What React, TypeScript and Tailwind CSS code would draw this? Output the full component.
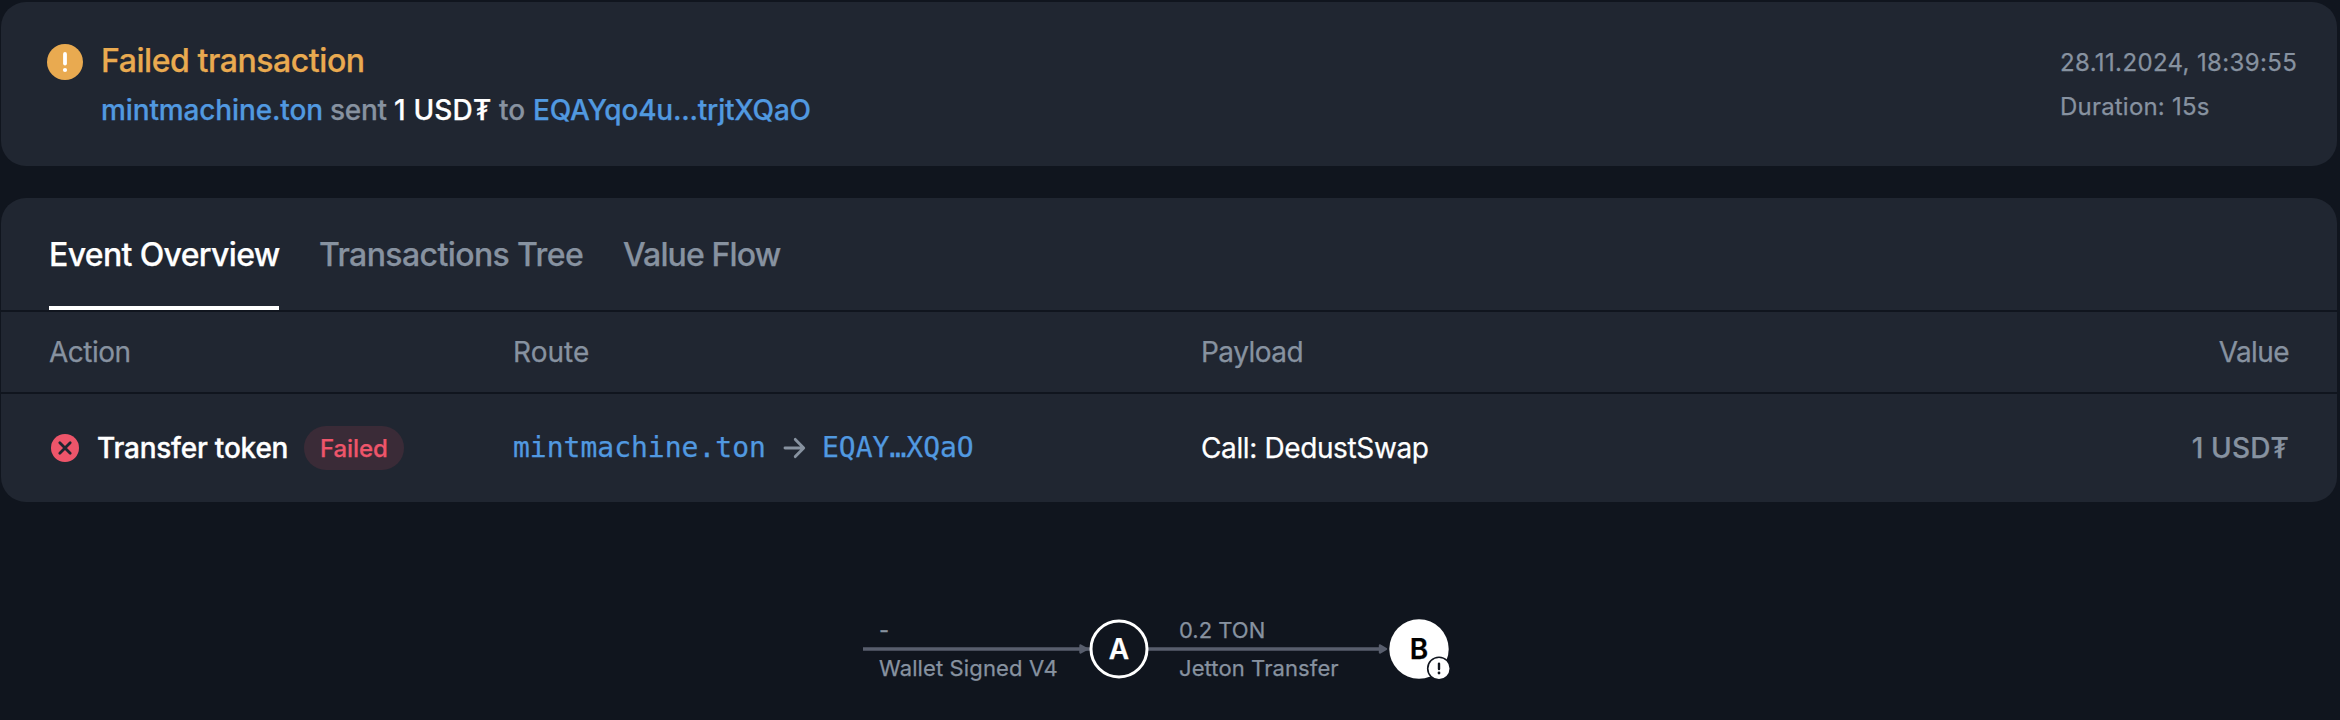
function Header() {
  return (
    <section className="flex h-[164px] justify-between rounded-[25px] bg-[#202631] pr-[41px] pl-[46px]">
      <div className="flex pt-[37px]">
        <svg className="mt-[5px] h-9 w-9" viewBox="0 0 36 36">
          <circle cx="18" cy="18" r="18" fill="#e9aa50" />
          <path d="M18 10v9.5" stroke="#fff" strokeWidth="3.8" strokeLinecap="round" />
          <circle cx="18" cy="26" r="2.1" fill="#fff" />
        </svg>
        <div className="ml-[18px]">
          <h1 className="h-11 text-[32px] leading-[44px] font-medium tracking-[-0.44px] text-[#e9aa50]">
            Failed transaction
          </h1>
          <div className="mt-[7px] flex text-[28px] leading-10 font-medium whitespace-nowrap">
            <span className="w-[229px] tracking-[-0.13px] text-[#5199e0]">mintmachine.ton</span>
            <span className="w-[64px] tracking-[-0.29px] text-[#8792a0]">sent</span>
            <span className="w-[105px] tracking-[0.18px] text-white">1 USD₮</span>
            <span className="w-[34px] text-[#8792a0]">to</span>
            <span className="tracking-[-0.21px] text-[#5199e0]">EQAYqo4u...trjtXQaO</span>
          </div>
        </div>
      </div>
      <div className="w-[236px] pt-[39px] text-[24px] leading-[44px] whitespace-nowrap text-[#8792a0]">
        <div className="tracking-[0.36px]">28.11.2024, 18:39:55</div>
        <div className="tracking-[0.2px]">Duration: 15s</div>
      </div>
    </section>
  );
}

function Tabs() {
  return (
    <nav className="flex h-28 pl-12 text-[32px] leading-[114px] font-medium whitespace-nowrap text-[#8792a0]">
      <div className="h-28 w-[230px] border-b-4 border-white tracking-[-0.65px] text-white">Event Overview</div>
      <div className="ml-10 w-[264px] tracking-[-0.6px]">Transactions Tree</div>
      <div className="ml-10 tracking-[-0.87px]">Value Flow</div>
    </nav>
  );
}

function ActionTable() {
  return (
    <div className="text-[28px] whitespace-nowrap text-[#8792a0]">
      <div className="grid h-[82px] grid-cols-[464px_688px_1fr_auto] items-center border-t-2 border-[#10151e] pr-[48px] pl-12">
        <div className="tracking-[-0.5px]">Action</div>
        <div className="tracking-[0.02px]">Route</div>
        <div className="tracking-[-0.53px]">Payload</div>
        <div className="tracking-[-0.6px]">Value</div>
      </div>
      <div className="grid h-[110px] grid-cols-[464px_688px_1fr_auto] items-center border-t-2 border-[#10151e] pr-[48px] pl-12">
        <div className="flex items-center">
          <svg className="ml-0.5 h-7 w-7" viewBox="0 0 28 28">
            <circle cx="14" cy="14" r="14" fill="#ee556a" />
            <path d="M8.8 8.8l10.4 10.4M19.2 8.8L8.8 19.2" stroke="#202631" strokeWidth="2.8" strokeLinecap="round" />
          </svg>
          <span className="ml-[18px] w-[207px] font-medium tracking-[-0.22px] text-white [-webkit-text-stroke:0.35px]">Transfer token</span>
          <span className="flex h-11 w-[100px] items-center rounded-full bg-[#3a2b37] pt-px pl-[16px] text-[24px] font-medium tracking-[-0.08px] text-[#ee556a]">
            Failed
          </span>
        </div>
        <div className="flex items-center font-['DejaVu_Sans_Mono',monospace] text-[#5199e0]">
          <span className="w-[270px]">mintmachine.ton</span>
          <svg className="h-6 w-[24px]" viewBox="0 0 24 24" fill="none" stroke="#8792a0" strokeWidth="2.9" strokeLinecap="round" strokeLinejoin="round">
            <path d="M2 12h18.5M12.3 3.4l8.4 8.6-8.4 8.6" />
          </svg>
          <span className="ml-[15px]">EQAY…XQaO</span>
        </div>
        <div className="tracking-[-0.38px] text-white">Call: DedustSwap</div>
        <div className="font-medium tracking-[0.15px]">1 USD₮</div>
      </div>
    </div>
  );
}

function TransactionGraph() {
  return (
    <div className="relative h-[88px] w-[620px] text-[22px] leading-7 whitespace-nowrap text-[#8792a0]">
      <svg className="absolute inset-0 h-[88px] w-[620px]" viewBox="0 0 620 88">
        <path d="M13 49h227M298 49h235" stroke="#585e6d" strokeWidth="3.4" />
        <path d="M230.5 45.5l6.5 3.5-6.5 3.5zM530 45.5l6 3.5-6 3.5z" fill="#585e6d" stroke="#585e6d" strokeWidth="2.4" strokeLinejoin="round" />
        <circle cx="269" cy="49" r="28" fill="#10151e" stroke="#fff" strokeWidth="3" />
        <circle cx="569" cy="49" r="29.7" fill="#fff" />
        <circle cx="589" cy="68.5" r="11.3" fill="#fff" stroke="#10151e" strokeWidth="1.6" />
        <path d="M589 63.8v5.2" stroke="#10151e" strokeWidth="2.4" strokeLinecap="round" />
        <circle cx="589" cy="73" r="1.4" fill="#10151e" />
      </svg>
      <span className="absolute top-4 left-[29px]">-</span>
      <span className="absolute top-[54px] left-[29px] tracking-[0.12px]">Wallet Signed V4</span>
      <span className="absolute top-4 left-[329px]">0.2 TON</span>
      <span className="absolute top-[54px] left-[329px] tracking-[0.1px]">Jetton Transfer</span>
      <span className="absolute top-[35px] left-[239px] w-[60px] text-center text-[28px] font-semibold text-white">A</span>
      <span className="absolute top-[35px] left-[539px] w-[60px] text-center text-[28px] font-semibold text-black">B</span>
    </div>
  );
}

export default function App() {
  return (
    <main className="h-[720px] w-[2340px] overflow-hidden bg-[#10151e] pt-0.5 pr-[3px] pl-px font-['Inter',sans-serif] [-webkit-text-stroke:0.25px]">
      <Header />
      <section className="mt-8 h-[304px] overflow-hidden rounded-[25px] bg-[#202631]">
        <Tabs />
        <ActionTable />
      </section>
      <div className="flex pt-[98px] pl-[849px]">
        <TransactionGraph />
      </div>
    </main>
  );
}
